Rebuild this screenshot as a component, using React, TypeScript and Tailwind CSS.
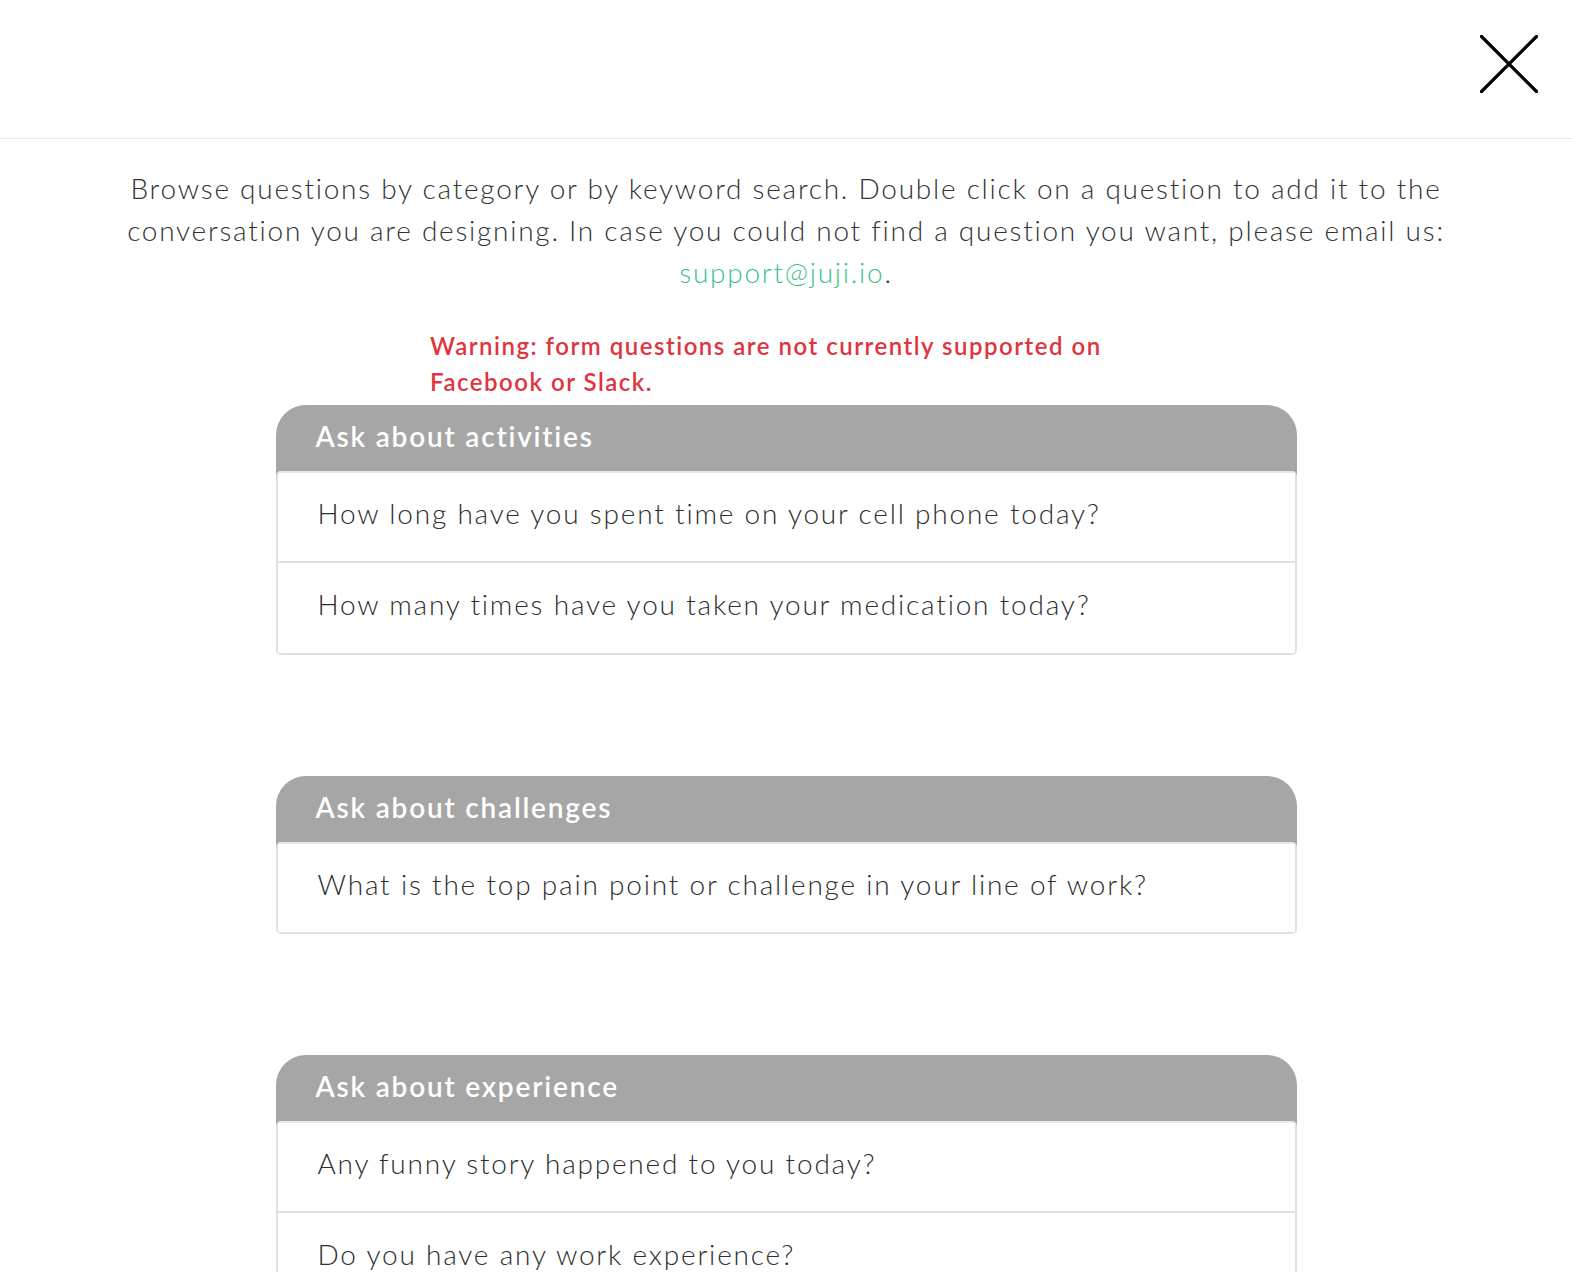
const font = { fontFamily: 'Lato, "Open Sans", sans-serif' };

const categories = [
  {
    title: 'Ask about activities',
    questions: [
      'How long have you spent time on your cell phone today?',
      'How many times have you taken your medication today?',
    ],
  },
  {
    title: 'Ask about challenges',
    questions: ['What is the top pain point or challenge in your line of work?'],
  },
  {
    title: 'Ask about experience',
    questions: ['Any funny story happened to you today?', 'Do you have any work experience?'],
  },
];

function CategoryCard({ title, questions }: { title: string; questions: string[] }) {
  return (
    <div className="w-[1021px]">
      <div className="h-[66px] bg-[#a6a6a6] rounded-t-[30px] flex items-center pl-10 pb-[5px] text-white text-[28px] font-semibold tracking-[1.8px]">
        {title}
      </div>
      <div className="bg-[linear-gradient(#a6a6a6_0_8px,transparent_8px)]">
        <div className="bg-white border-x-2 border-[#e0e0e0] rounded-[5px] overflow-hidden">
          {questions.map((q, i) => (
            <div
              key={q}
              className={`h-[92px] flex items-center pl-10 pb-2 text-[28px] font-light text-[#2e2e2e] tracking-[1.8px] border-b-2 border-[#e0e0e0] ${
                i === 0 ? 'border-t-2 border-t-[#e8e8e8]' : ''
              }`}
            >
              {q}
            </div>
          ))}
        </div>
      </div>
    </div>
  );
}

export default function App() {
  return (
    <div className="w-[1572px] h-[1272px] overflow-hidden bg-white" style={font}>
      {/* top bar */}
      <div className="h-[139px] border-b border-[#e6e8eb] flex justify-end items-start pt-[35px] pr-[34px]">
        <svg width="58" height="58" viewBox="0 0 58 58">
          <path d="M1.5 1.5 L56.5 56.5 M56.5 1.5 L1.5 56.5" stroke="#000" strokeWidth="3.2" strokeLinecap="round" />
        </svg>
      </div>

      {/* intro */}
      <p className="mt-[28px] text-center text-[28px] leading-[42px] font-light text-[#333] tracking-[1.75px]">
        Browse questions by category or by keyword search. Double click on a question to add it to the
        <br />
        conversation you are designing. In case you could not find a question you want, please email us:
        <br />
        <span className="text-[#3dbf8d]">support@juji.io</span>.
      </p>

      <div className="flex flex-col items-center">
        <div className="w-[712px] mt-[35px] text-[24px] leading-[36px] font-semibold text-[#e0343f] tracking-[1.5px]">
          Warning: form questions are not currently supported on
          <br />
          Facebook or Slack.
        </div>

        <div className="mt-[5px] flex flex-col gap-[121px]">
          {categories.map((c) => (
            <CategoryCard key={c.title} title={c.title} questions={c.questions} />
          ))}
        </div>
      </div>
    </div>
  );
}
